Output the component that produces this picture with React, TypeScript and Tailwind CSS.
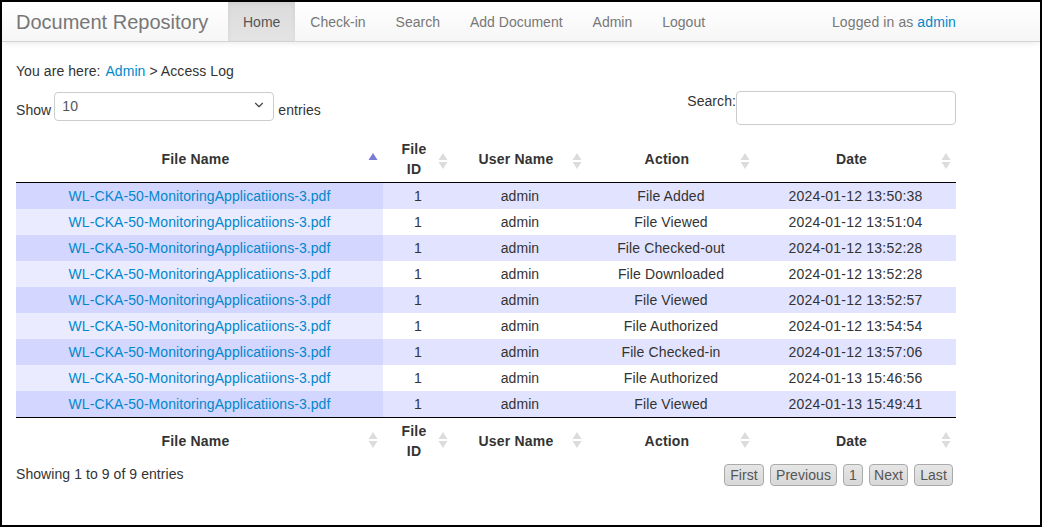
import { ChevronDown } from "lucide-react";

const LOG = [
  ["File Added", "2024-01-12 13:50:38"],
  ["File Viewed", "2024-01-12 13:51:04"],
  ["File Checked-out", "2024-01-12 13:52:28"],
  ["File Downloaded", "2024-01-12 13:52:28"],
  ["File Viewed", "2024-01-12 13:52:57"],
  ["File Authorized", "2024-01-12 13:54:54"],
  ["File Checked-in", "2024-01-12 13:57:06"],
  ["File Authorized", "2024-01-13 15:46:56"],
  ["File Viewed", "2024-01-13 15:49:41"],
];

const NAV = ["Home", "Check-in", "Search", "Add Document", "Admin", "Logout"];
const COLUMNS = ["File Name", "File ID", "User Name", "Action", "Date"];
const PAGES = [
  { label: "First", width: "w-[40px]" },
  { label: "Previous", width: "w-[67px]" },
  { label: "1", width: "w-[20px]" },
  { label: "Next", width: "w-[39px]" },
  { label: "Last", width: "w-[39px]" },
];

function SortIcon({ active }: { active?: boolean }) {
  return (
    <svg width="10" height="16" viewBox="0 0 10 16" className="absolute right-[5px] top-1/2 -mt-[8px]">
      <path d="M5 0 L9.5 7 L0.5 7 Z" fill={active ? "#7a7bd4" : "#dcdcdc"} />
      {!active && <path d="M0.5 9 L9.5 9 L5 16 Z" fill="#dcdcdc" />}
    </svg>
  );
}

function HeaderCells({ footer }: { footer?: boolean }) {
  return (
    <tr>
      {COLUMNS.map((col, i) => (
        <th
          key={col}
          className={
            "relative pl-[10px] pr-[18px] text-center font-bold leading-[20px] tracking-[0.2px] " +
            (footer ? "pt-[3px] pb-0 border-t border-black" : "pt-0 pb-[3px] border-b border-black")
          }
        >
          {col === "File ID" ? (
            <>
              File
              <br />
              ID
            </>
          ) : (
            col
          )}
          <SortIcon active={!footer && i === 0} />
        </th>
      ))}
    </tr>
  );
}

export default function App() {
  return (
    <div className="h-[527px] w-[1042px] overflow-hidden border-2 border-black bg-white text-[14px] leading-[20px] text-[#333] [font-family:'Liberation_Sans',Arial,sans-serif]">
      <nav className="flex h-[40px] items-stretch border-b border-[#d4d4d4] bg-gradient-to-b from-white to-[#f6f6f6] pl-[14px] pr-[84px] text-[#777] shadow-[0_1px_6px_rgba(0,0,0,0.09)]">
        <div className="mr-[20px] flex w-[192px] items-center whitespace-nowrap text-[20px]">Document Repository</div>
        {NAV.map((item, i) => (
          <div
            key={item}
            className={
              "flex items-center px-[15px] " +
              (i === 0 ? "bg-gradient-to-b from-[#dbdbdb] to-[#e4e4e4] text-[#555] shadow-[inset_0_2px_5px_rgba(0,0,0,0.06)]" : "")
            }
          >
            {item}
          </div>
        ))}
        <div className="ml-auto flex items-center tracking-[0.1px]">
          Logged in as&nbsp;<span className="text-[#08c]">admin</span>
        </div>
      </nav>

      <main className="w-[954px] pl-[14px] tracking-[0.07px]">
        <p className="mt-[19px]">
          You are here: <span className="ml-px text-[#08c]">Admin</span> &gt; Access Log
        </p>

        <div className="mt-[10px] flex items-start justify-between">
          <div className="mt-[1px] flex items-center">
            <span className="mt-[7px]">Show</span>
            <div className="ml-[3px] mr-[4px] flex h-[29px] w-[220px] items-start justify-between rounded-[4px] border border-[#ccc] bg-white pl-[7px] pr-[7px] pt-[3px] text-[14px] text-[#555]">
              10
              <ChevronDown size={14} strokeWidth={2} className="mt-[2px] text-[#444]" />
            </div>
            <span className="mt-[7px]">entries</span>
          </div>
          <div className="flex items-start">
            <span>Search:</span>
            <div className="h-[34px] w-[220px] rounded-[4px] border border-[#ccc] bg-white" />
          </div>
        </div>

        <table className="mt-[14px] w-[940px] table-fixed border-separate border-spacing-0">
          <colgroup>
            <col className="w-[367px]" />
            <col className="w-[70px]" />
            <col className="w-[134px]" />
            <col className="w-[168px]" />
            <col className="w-[201px]" />
          </colgroup>
          <thead>
            <HeaderCells />
          </thead>
          <tbody className="text-center">
            {LOG.map(([action, date], i) => (
              <tr key={i} className={"h-[26px] " + (i % 2 === 0 ? "bg-[#e2e4ff]" : "bg-white")}>
                <td className={"p-0 text-[#08c] " + (i % 2 === 0 ? "bg-[#d3d6ff]" : "bg-[#eaebff]")}>
                  WL-CKA-50-MonitoringApplicatiions-3.pdf
                </td>
                <td className="p-0">1</td>
                <td className="p-0">admin</td>
                <td className="p-0 tracking-[0.12px]">{action}</td>
                <td className="p-0 tracking-[0.22px]">{date}</td>
              </tr>
            ))}
          </tbody>
          <tfoot>
            <HeaderCells footer />
          </tfoot>
        </table>

        <div className="mt-[3px] flex items-start justify-between">
          <span>Showing 1 to 9 of 9 entries</span>
          <div className="mr-[3px] flex gap-[6px]">
            {PAGES.map((page) => (
              <div
                key={page.label}
                className={
                  "flex h-[22px] items-center justify-center rounded-[4px] border border-[#aaa] bg-gradient-to-b from-[#e6e6e6] to-[#d8d8d8] text-[#555] " +
                  page.width
                }
              >
                {page.label}
              </div>
            ))}
          </div>
        </div>
      </main>
    </div>
  );
}
